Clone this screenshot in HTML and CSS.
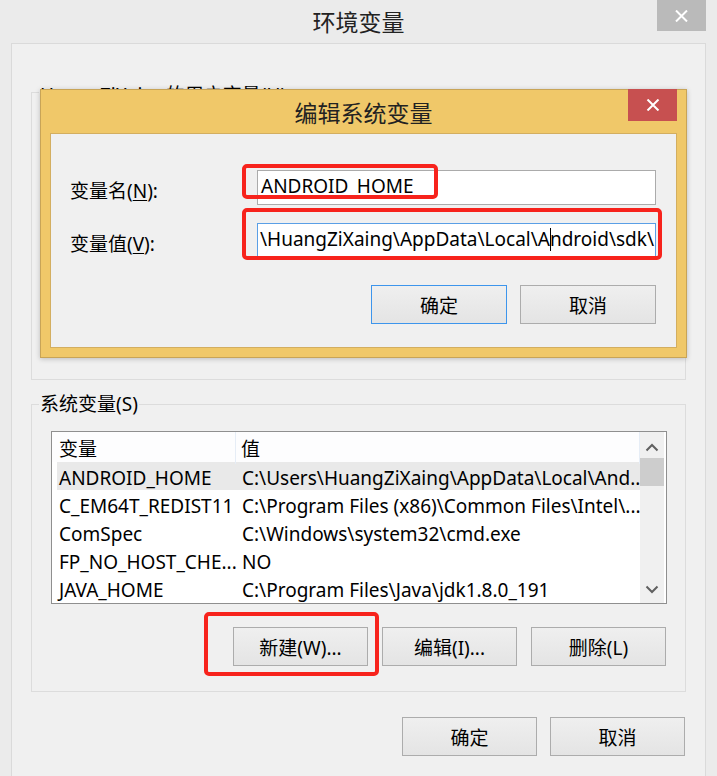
FILE: index.html
```html
<!DOCTYPE html>
<html lang="zh-CN">
<head>
<meta charset="utf-8">
<title>环境变量</title>
<link rel="stylesheet" href="styles.css">
</head>
<body>
<div class="window">
  <div class="titlebar">
    <span></span>
    <div class="title">环境变量</div>
    <div class="tb-close">
      <svg width="13" height="12" viewBox="0 0 13 12"><path d="M1 0.5 L12 11.5 M12 0.5 L1 11.5" stroke="#fff" stroke-width="2" fill="none"/></svg>
    </div>
  </div>

  <div class="panel">
    <div class="group group-user">
      <span class="group-label">HuangZiXaing的用户变量(U)</span>
    </div>

    <div class="group group-system">
      <span class="group-label">系统变量(S)</span>
      <div class="listbox">
        <div class="list-content">
          <div class="list-header">
            <div class="hcell hcell-name">变量</div>
            <div class="hcell hcell-value">值</div>
          </div>
          <div class="list-rows">
            <div class="row selected"><div class="cell">ANDROID_HOME</div><div class="cell cell-value">C:\Users\HuangZiXaing\AppData\Local\And...</div></div>
            <div class="row"><div class="cell">C_EM64T_REDIST11</div><div class="cell cell-value">C:\Program Files (x86)\Common Files\Intel\...</div></div>
            <div class="row"><div class="cell">ComSpec</div><div class="cell cell-value">C:\Windows\system32\cmd.exe</div></div>
            <div class="row"><div class="cell">FP_NO_HOST_CHE...</div><div class="cell cell-value">NO</div></div>
            <div class="row"><div class="cell">JAVA_HOME</div><div class="cell cell-value">C:\Program Files\Java\jdk1.8.0_191</div></div>
          </div>
        </div>
        <div class="scrollbar">
          <div class="sb-btn">
            <svg width="24" height="26" viewBox="0 0 24 26"><polyline points="6.5,18.5 12,13 17.5,18.5" stroke="#606060" stroke-width="2" fill="none"/></svg>
          </div>
          <div class="sb-thumb"></div>
          <div class="sb-track"></div>
          <div class="sb-btn">
            <svg width="24" height="26" viewBox="0 0 24 26"><polyline points="6.5,9.5 12,15 17.5,9.5" stroke="#606060" stroke-width="2" fill="none"/></svg>
          </div>
        </div>
      </div>
      <div class="btn-row group-btns">
        <div class="btn">新建(W)...</div>
        <div class="btn">编辑(I)...</div>
        <div class="btn">删除(L)</div>
      </div>
    </div>

    <div class="btn-row footer-btns">
      <div class="btn">确定</div>
      <div class="btn">取消</div>
    </div>
  </div>

  <div class="dialog">
    <div class="dialog-title">编辑系统变量</div>
    <div class="dlg-close">
      <svg width="14" height="12" viewBox="0 0 14 12"><path d="M1.5 0.5 L12.5 11.5 M12.5 0.5 L1.5 11.5" stroke="#fff" stroke-width="2" fill="none"/></svg>
    </div>
    <div class="dialog-body">
      <div class="field">
        <div class="field-label">变量名(<u>N</u>):</div>
        <div class="textbox">ANDROID_HOME</div>
      </div>
      <div class="field">
        <div class="field-label">变量值(<u>V</u>):</div>
        <div class="textbox focused">\HuangZiXaing\AppData\Local\A<span class="caret"></span>ndroid\sdk\</div>
      </div>
      <div class="btn-row dialog-btns">
        <div class="btn btn-default">确定</div>
        <div class="btn">取消</div>
      </div>
    </div>
  </div>

  <div class="mark mark-name"></div>
  <div class="mark mark-value"></div>
  <div class="mark mark-new"></div>
</div>
</body>
</html>
```
FILE: styles.css
```css
html, body {
  margin: 0;
  padding: 0;
}
body {
  background: #ebebeb;
  font-family: "Noto Sans", "Noto Sans CJK SC", sans-serif;
  font-size: 19px;
  color: #000;
}
.window {
  position: relative;
  width: 717px;
  height: 776px;
  overflow: hidden;
  background: #ebebeb;
}

/* outer title bar */
.titlebar {
  height: 43px;
  display: grid;
  grid-template-columns: 1fr auto 1fr;
}
.title {
  font-size: 23px;
  line-height: 45px;
  color: #222;
}
.tb-close {
  justify-self: end;
  align-self: start;
  margin-right: 11px;
  width: 49px;
  height: 31px;
  background: #bababa;
  display: flex;
  align-items: center;
  justify-content: center;
}

/* main panel */
.panel {
  margin: 0 11px;
  height: 733px;
  box-sizing: border-box;
  border: 1px solid #dadada;
  border-bottom: none;
  background: #f0f0f0;
  padding: 0 19px;
  display: flow-root;
}
.group {
  box-sizing: border-box;
  height: 288px;
  border: 1px solid #dcdcdc;
  display: flow-root;
}
.group-user {
  margin-top: 48px;
}
.group-system {
  margin-top: 24px;
}
.group-label {
  display: block;
  width: max-content;
  margin: -13px 0 0 7px;
  padding: 0 1px;
  line-height: 24px;
  background: #f0f0f0;
  color: #000;
}
.group-user .group-label {
  margin-top: -10px;
}

/* list box */
.listbox {
  margin: 15px 18px 0 19px;
  height: 173px;
  box-sizing: border-box;
  border: 1px solid #8f8f8f;
  background: #fff;
  display: flex;
}
.list-content {
  flex: 1;
  min-width: 0;
}
.list-header {
  height: 30px;
  display: grid;
  grid-template-columns: 184px 1fr;
  background: #fdfdfe;
}
.hcell {
  line-height: 30px;
  padding-top: 2px;
  box-sizing: border-box;
  border-right: 1px solid #e6edf6;
}
.hcell-name {
  padding-left: 7px;
}
.hcell-value {
  padding-left: 5px;
}
.list-rows {
  padding-left: 5px;
}
.row {
  height: 28px;
  display: grid;
  grid-template-columns: 179px 1fr;
  line-height: 28px;
  white-space: nowrap;
}
.row.selected {
  background: #e9e9e9;
}
.cell {
  padding: 2px 0 0 2px;
  height: 28px;
  box-sizing: border-box;
}
.cell-value {
  padding-left: 6px;
}
.scrollbar {
  width: 24px;
  margin-right: 2px;
  background: #f0f0f0;
  display: flex;
  flex-direction: column;
}
.sb-btn {
  height: 26px;
}
.sb-btn svg {
  display: block;
}
.sb-thumb {
  height: 28px;
  background: #cdcdcd;
}
.sb-track {
  flex: 1;
}

/* buttons */
.btn-row {
  display: flex;
  justify-content: flex-end;
  gap: 14px;
}
.group-btns {
  margin: 23px 19px 0 0;
}
.footer-btns {
  margin: 25px 1px 0 0;
  gap: 13px;
}
.btn {
  width: 135px;
  height: 39px;
  box-sizing: border-box;
  border: 1px solid #acacac;
  background: linear-gradient(#efefef, #e4e4e4);
  display: flex;
  align-items: center;
  justify-content: center;
  white-space: nowrap;
}
.btn-default {
  border-color: #3d95ec;
}

/* edit dialog (modal overlay) */
.dialog {
  position: absolute;
  left: 40px;
  top: 89px;
  width: 647px;
  height: 269px;
  box-sizing: border-box;
  background: #f0c869;
  border: 1px solid #c8a457;
  box-shadow: 0 1px 5px rgba(0, 0, 0, 0.22);
  padding: 0 9px 9px;
  display: flex;
  flex-direction: column;
}
.dialog-title {
  height: 43px;
  line-height: 46px;
  text-align: center;
  font-size: 23px;
  color: #222;
}
.dlg-close {
  position: absolute;
  top: -1px;
  right: 9px;
  width: 49px;
  height: 32px;
  background: #c75050;
  display: flex;
  align-items: center;
  justify-content: center;
}
.dialog-body {
  flex: 1;
  border: 1px solid #d3ae60;
  background: #f0f0f0;
  padding: 36px 20px 0 19px;
  display: flex;
  flex-direction: column;
  gap: 18px;
}
.field {
  display: grid;
  grid-template-columns: 1fr 399px;
  align-items: center;
}
.field-label {
  padding-top: 4px;
}
.field-label u {
  text-underline-offset: 2px;
}
.textbox {
  height: 35px;
  box-sizing: border-box;
  border: 1px solid #ababab;
  background: #fff;
  padding: 0 3px 0 3px;
  line-height: 31px;
  white-space: nowrap;
  overflow: hidden;
}
.textbox.focused {
  border-color: #5a9fe6;
  padding-left: 2px;
}
.caret {
  display: inline-block;
  width: 1px;
  height: 23px;
  background: #000;
  vertical-align: -5px;
  margin-right: -1px;
}
.dialog-btns {
  margin-top: 9px;
  gap: 13px;
}
.dialog-btns .btn {
  width: 136px;
}

/* red annotation boxes */
.mark {
  position: absolute;
  box-sizing: border-box;
  border: 4px solid #f7231c;
  border-radius: 5px;
}
.mark-name {
  left: 242px;
  top: 164px;
  width: 196px;
  height: 35px;
}
.mark-value {
  left: 242px;
  top: 208px;
  width: 420px;
  height: 52px;
}
.mark-new {
  left: 204px;
  top: 612px;
  width: 175px;
  height: 64px;
}
```
